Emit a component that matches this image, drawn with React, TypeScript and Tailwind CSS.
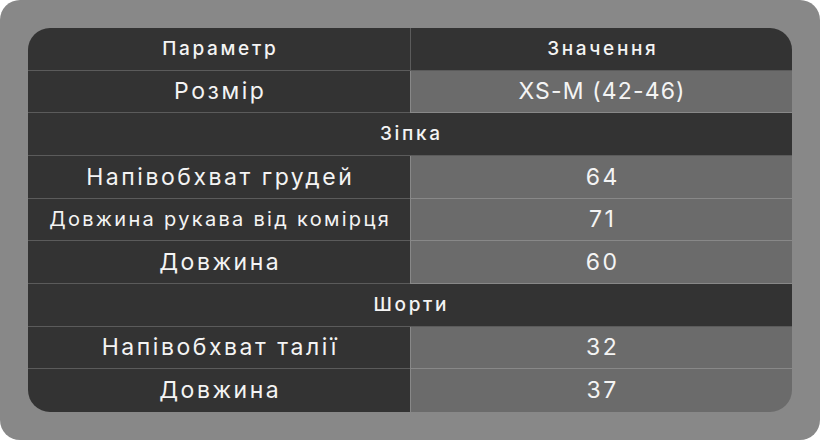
import React from "react";

type Row =
  | { kind: "head"; a: string; b: string }
  | { kind: "row"; a: string; b: string; small?: boolean; tight?: boolean }
  | { kind: "section"; t: string };

const rows: Row[] = [
  { kind: "head", a: "Параметр", b: "Значення" },
  { kind: "row", a: "Розмір", b: "XS-M (42-46)", tight: true },
  { kind: "section", t: "Зіпка" },
  { kind: "row", a: "Напівобхват грудей", b: "64" },
  { kind: "row", a: "Довжина рукава від комірця", b: "71", small: true },
  { kind: "row", a: "Довжина", b: "60" },
  { kind: "section", t: "Шорти" },
  { kind: "row", a: "Напівобхват талії", b: "32" },
  { kind: "row", a: "Довжина", b: "37" },
];

export default function App() {
  return (
    <div className="w-[820px] h-[440px] bg-white">
      <div
        className="w-[820px] h-[440px] bg-[#888888] rounded-[20px] p-[28px]"
        style={{ fontFamily: "Inter, 'DejaVu Sans', sans-serif" }}
      >
        <div className="w-full h-full rounded-[22px] overflow-hidden grid grid-cols-2 grid-rows-9 text-[#f4f4f4]">
          {rows.map((r, i) => {
            const last = i === rows.length - 1;
            const bb = last ? "" : "border-b border-white/20";
            if (r.kind === "section") {
              return (
                <div
                  key={i}
                  className={`col-span-2 bg-[#333333] flex items-center justify-center text-[19px] font-medium tracking-[0.14em] pl-[0.14em] ${bb}`}
                >
                  {r.t}
                </div>
              );
            }
            if (r.kind === "head") {
              return (
                <React.Fragment key={i}>
                  <div className={`bg-[#333333] flex items-center justify-center text-[19px] font-medium tracking-[0.14em] pl-[0.14em] ${bb}`}>
                    {r.a}
                  </div>
                  <div className={`bg-[#333333] flex items-center justify-center text-[19px] font-medium tracking-[0.14em] pl-[0.14em] border-l border-l-white/20 ${bb}`}>
                    {r.b}
                  </div>
                </React.Fragment>
              );
            }
            return (
              <React.Fragment key={i}>
                <div
                  className={`bg-[#333333] flex items-center justify-center ${r.small ? "text-[20px] tracking-[0.115em] pl-[0.115em]" : "text-[23px] tracking-[0.11em] pl-[0.11em]"} ${bb}`}
                >
                  {r.a}
                </div>
                <div
                  className={`bg-[#6b6b6b] flex items-center justify-center text-[23px] ${r.tight ? "tracking-[0.05em] pl-[0.05em]" : "tracking-[0.11em] pl-[0.11em]"} border-l border-l-white/20 ${bb}`}
                >
                  {r.b}
                </div>
              </React.Fragment>
            );
          })}
        </div>
      </div>
    </div>
  );
}
